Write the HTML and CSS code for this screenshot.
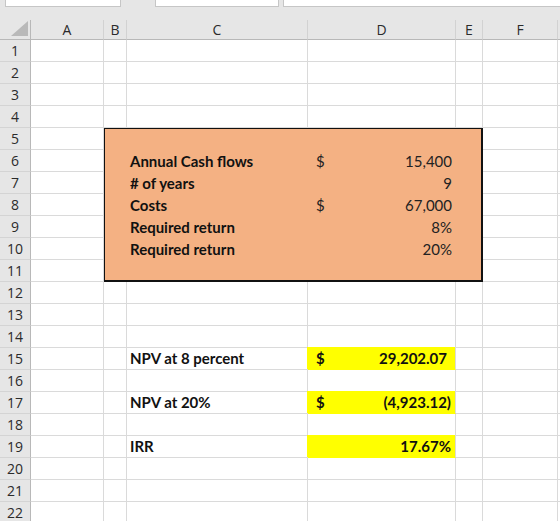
FILE: index.html
```html
<!DOCTYPE html>
<html lang="en">
<head>
    <meta charset="UTF-8">
    <meta name="viewport" content="width=device-width, initial-scale=1.0">
    <title>NPV Worksheet</title>
    <link rel="stylesheet" href="styles.css">
</head>
<body>
    <div class="toolbar">
        <div class="field name-box"></div>
        <div class="field formula-box"></div>
        <div class="field formula-rest"></div>
    </div>

    <div class="sheet" id="sheet">
        <div class="corner">
            <svg width="17" height="15" viewBox="0 0 17 15"><polygon points="17,0 17,15 0,15" fill="#b9b9b9"/></svg>
        </div>
        <div class="col-head">A</div>
        <div class="col-head">B</div>
        <div class="col-head">C</div>
        <div class="col-head">D</div>
        <div class="col-head">E</div>
        <div class="col-head">F</div>
        <div class="col-head"></div>

        <!-- input block, B5:E11 -->
        <div class="inputs">
            <div class="in-row">
                <span class="label">Annual Cash flows</span>
                <span class="value acct"><span>$</span><span>15,400</span></span>
            </div>
            <div class="in-row">
                <span class="label"># of years</span>
                <span class="value"><span></span><span>9</span></span>
            </div>
            <div class="in-row">
                <span class="label">Costs</span>
                <span class="value acct"><span>$</span><span>67,000</span></span>
            </div>
            <div class="in-row">
                <span class="label">Required return</span>
                <span class="value"><span></span><span>8%</span></span>
            </div>
            <div class="in-row">
                <span class="label">Required return</span>
                <span class="value"><span></span><span>20%</span></span>
            </div>
        </div>
    </div>

    <script>
        const cols = ["A", "B", "C", "D", "E", "F", "G"];
        const results = {
            15: { label: "NPV at 8 percent", sign: "$", value: "29,202.07", acct: true },
            17: { label: "NPV at 20%", sign: "$", value: "(4,923.12)" },
            19: { label: "IRR", sign: "", value: "17.67%" }
        };

        function inBlock(row, col) {
            return row >= 5 && row <= 11 && col >= 1 && col <= 4;
        }

        const sheet = document.getElementById("sheet");
        let html = "";
        for (let row = 1; row <= 22; row++) {
            html += `<div class="row-head">${row}</div>`;
            cols.forEach((name, col) => {
                if (inBlock(row, col)) return;
                const res = results[row];
                if (res && name === "C") {
                    html += `<div class="cell strong">${res.label}</div>`;
                } else if (res && name === "D") {
                    html += `<div class="cell hl${res.acct ? " acct" : ""}"><span>${res.sign}</span><span>${res.value}</span></div>`;
                } else {
                    html += `<div class="cell"></div>`;
                }
            });
        }
        sheet.insertAdjacentHTML("beforeend", html);
    </script>
</body>
</html>
```

FILE: styles.css
```css
/* Reset */
* {
    margin: 0;
    padding: 0;
    box-sizing: border-box;
}

body {
    font-family: "Lato", "Liberation Sans", sans-serif;
    background: #fff;
    color: #111;
    overflow: hidden;
}

/* Formula bar strip, cut off at the top */
.toolbar {
    display: flex;
    height: 20px;
    padding-left: 5px;
    background: #e6e6e6;
}

.field {
    height: 7px;
    background: #fff;
    border: 1px solid #c6c6c6;
    border-top: none;
}

.name-box {
    width: 116px;
}

.formula-box {
    width: 124px;
    margin-left: 34px;
}

.formula-rest {
    flex: 1;
    margin-left: 4px;
    margin-right: -1px;
}

/* Worksheet grid */
.sheet {
    display: grid;
    grid-template-columns: 31px 73px 23px 181px 148px 27px 75px 1fr;
    grid-template-rows: 20px repeat(22, 22px);
}

.corner,
.col-head,
.row-head {
    background: #e6e6e6;
    font-family: "Open Sans", "Noto Sans", sans-serif;
    font-size: 14px;
    color: #2b2b2b;
}

.corner {
    display: flex;
    align-items: flex-end;
    justify-content: flex-end;
    padding: 0 2px 3px 0;
    border-right: 1px solid #b8b8b8;
    border-bottom: 1px solid #b8b8b8;
}

.col-head {
    text-align: center;
    line-height: 19px;
    border-right: 1px solid #d2d2d2;
    border-bottom: 1px solid #b8b8b8;
}

.row-head {
    text-align: center;
    line-height: 22px;
    border-right: 1px solid #b8b8b8;
    border-bottom: 1px solid #d4d4d4;
}

.cell {
    padding: 0 3px;
    line-height: 21px;
    font-size: 15px;
    white-space: nowrap;
    border-right: 1px solid #dadada;
    border-bottom: 1px solid #dadada;
}

.strong {
    font-weight: 700;
}

/* Yellow result cells */
.hl {
    display: flex;
    justify-content: space-between;
    padding: 0 4px 0 8px;
    font-weight: 700;
    background: #ffff00;
    border-bottom-color: #ffff00;
    box-shadow: -1px -1px 0 #ffff00;
}

.hl.acct,
.value.acct {
    padding-right: 8px;
}

/* Orange input block */
.inputs {
    grid-column: 3 / 7;
    grid-row: 6 / 13;
    margin: -1px 0 0 -1px;
    padding-top: 21px;
    background: #f4b183;
    border: 2px solid #111;
}

.in-row {
    display: flex;
    height: 22px;
    line-height: 22px;
    font-size: 15px;
    white-space: nowrap;
}

.in-row .label {
    width: 181px;
    margin-left: 22px;
    padding-left: 3px;
    font-weight: 700;
}

.in-row .value {
    display: flex;
    justify-content: space-between;
    width: 148px;
    padding: 0 4px 0 8px;
    color: #222;
}
```
